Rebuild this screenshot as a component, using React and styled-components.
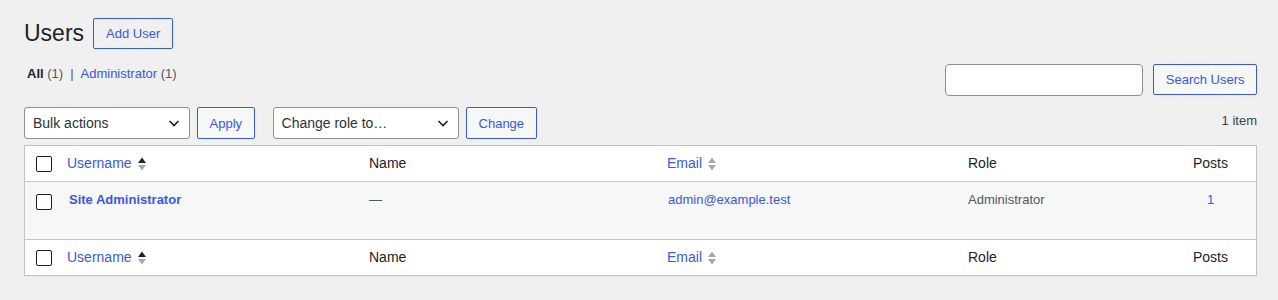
import React from 'react';
import styled, { createGlobalStyle } from 'styled-components';

const GlobalStyle = createGlobalStyle`
  body {
    margin: 0;
    background: #f0f0f1;
    font-family: "Liberation Sans", Arial, sans-serif;
    font-size: 13px;
    color: #3c434a;
  }
`;

const Wrap = styled.div`
  padding: 0 21px 20px 24px;
`;

const TitleRow = styled.div`
  display: flex;
  align-items: center;
  gap: 9px;
  padding-top: 17px;
  height: 33px;
`;

const Title = styled.h1`
  margin: 0;
  font-size: 23px;
  font-weight: 400;
  color: #1d2327;
  line-height: 1.3;
`;

const OutlineButton = styled.button`
  font-family: inherit;
  font-size: 13px;
  color: #3858e9;
  background: ${p => (p.$light ? '#f6f7f7' : 'transparent')};
  border: 1px solid #3858e9;
  border-radius: 2px;
  height: ${p => p.$h || 32}px;
  padding: 0 ${p => p.$px || 12}px;
  cursor: pointer;
`;

const FilterRow = styled.div`
  display: flex;
  justify-content: space-between;
  align-items: flex-start;
  height: 43px;
  margin-top: 14px;
`;

const Views = styled.div`
  font-size: 13px;
  color: #50575e;
  padding: 2px 0 0 3px;
  & b { color: #1d2327; }
  & a { color: #3858e9; text-decoration: none; }
`;

const Sep = styled.span`
  margin: 0 7px;
  color: #50575e;
`;

const SearchBox = styled.div`
  display: flex;
  gap: 10px;
`;

const SearchInput = styled.div`
  width: 196px;
  height: 30px;
  background: #fff;
  border: 1px solid #8c8f94;
  border-radius: 4px;
`;

const Toolbar = styled.div`
  display: flex;
  align-items: center;
  height: 32px;
`;

const Group = styled.div`
  display: flex;
  gap: 7px;
  margin-right: 18px;
`;

const Select = styled.div`
  width: ${p => p.$w}px;
  height: 30px;
  box-sizing: content-box;
  border: 1px solid #8c8f94;
  border-radius: 3px;
  background: #fff;
  display: flex;
  align-items: center;
  justify-content: space-between;
  padding: 0 7px 0 8px;
  font-size: 14px;
  color: #2c3338;
`;

const Count = styled.div`
  margin-left: auto;
  color: #3c434a;
  align-self: flex-start;
  padding-top: 6px;
`;

const Table = styled.div`
  margin-top: 6px;
  background: #fff;
  border: 1px solid #c3c4c7;
  box-shadow: 0 1px 1px rgba(0, 0, 0, 0.04);
`;

const Row = styled.div`
  display: grid;
  grid-template-columns: 34px 300px 298px 301px 1fr 83px;
  min-height: ${p => p.$h}px;
  background: ${p => (p.$alt ? '#f6f7f7' : '#fff')};
  border-top: ${p => (p.$top ? '1px solid #c3c4c7' : 'none')};
  border-bottom: ${p => (p.$bottom ? '1px solid #c3c4c7' : 'none')};
  box-sizing: border-box;
`;

const Cell = styled.div`
  padding: ${p => p.$pad || '0 10px'};
  display: flex;
  align-items: ${p => (p.$top ? 'flex-start' : 'center')};
  justify-content: ${p => (p.$center ? 'center' : 'flex-start')};
  font-size: ${p => (p.$head ? 14 : 13)}px;
  color: ${p => (p.$head ? '#1d2327' : '#50575e')};
  line-height: 19.5px;
`;

const CheckBox = styled.span`
  width: 14px;
  height: 14px;
  border: 1px solid #1e1e1e;
  border-radius: 2px;
  background: #fff;
  margin-left: 11px;
  margin-top: ${p => p.$mt || 0}px;
  flex: none;
`;

const Link = styled.a`
  color: #3858e9;
  text-decoration: none;
  font-weight: ${p => (p.$bold ? 700 : 400)};
  display: inline-flex;
  align-items: center;
  gap: 5px;
`;

const Chevron = () => (
  <svg width="16" height="16" viewBox="0 0 16 16">
    <path d="M3.5 6l4.5 4.5L12.5 6" fill="none" stroke="#1e1e1e" strokeWidth="1.6" />
  </svg>
);

const SortArrows = ({ active }) => (
  <svg width="10" height="16" viewBox="0 0 10 16">
    <path d="M1 7L5 1.5L9 7Z" fill={active ? '#1d2327' : '#a7aaad'} />
    <path d="M1 9L5 14.5L9 9Z" fill="#a7aaad" />
  </svg>
);

const HeadRow = ({ top, bottom }) => (
  <Row $h={36} $top={top} $bottom={bottom}>
    <Cell $pad="0"><CheckBox $mt={1} /></Cell>
    <Cell $head $pad="0 0 0 8px"><Link>Username <SortArrows active /></Link></Cell>
    <Cell $head>Name</Cell>
    <Cell $head><Link>Email <SortArrows /></Link></Cell>
    <Cell $head>Role</Cell>
    <Cell $head $center $pad="0 18px 0 10px">Posts</Cell>
  </Row>
);

export default function App() {
  return (
    <Wrap>
      <GlobalStyle />
      <TitleRow>
        <Title>Users</Title>
        <OutlineButton $h={31} $px={12}>Add User</OutlineButton>
      </TitleRow>
      <FilterRow>
        <Views>
          <b>All</b> (1)<Sep>|</Sep><a>Administrator</a> (1)
        </Views>
        <SearchBox>
          <SearchInput />
          <OutlineButton $light $h={31} $px={11.5}>Search Users</OutlineButton>
        </SearchBox>
      </FilterRow>
      <Toolbar>
        <Group>
          <Select $w={149}>Bulk actions <Chevron /></Select>
          <OutlineButton $light $px={11.5}>Apply</OutlineButton>
        </Group>
        <Group>
          <Select $w={169}>Change role to… <Chevron /></Select>
          <OutlineButton $light $px={12}>Change</OutlineButton>
        </Group>
        <Count>1 item</Count>
      </Toolbar>
      <Table>
        <HeadRow bottom />
        <Row $h={57} $alt>
          <Cell $pad="0" $top><CheckBox $mt={12} /></Cell>
          <Cell $top $pad="8px 10px"><Link $bold>Site Administrator</Link></Cell>
          <Cell $top $pad="8px 10px">—</Cell>
          <Cell $top $pad="8px 10px 8px 11px"><Link>admin@example.test</Link></Cell>
          <Cell $top $pad="8px 10px">Administrator</Cell>
          <Cell $top $center $pad="8px 8px 8px 0"><Link>1</Link></Cell>
        </Row>
        <HeadRow top />
      </Table>
    </Wrap>
  );
}
